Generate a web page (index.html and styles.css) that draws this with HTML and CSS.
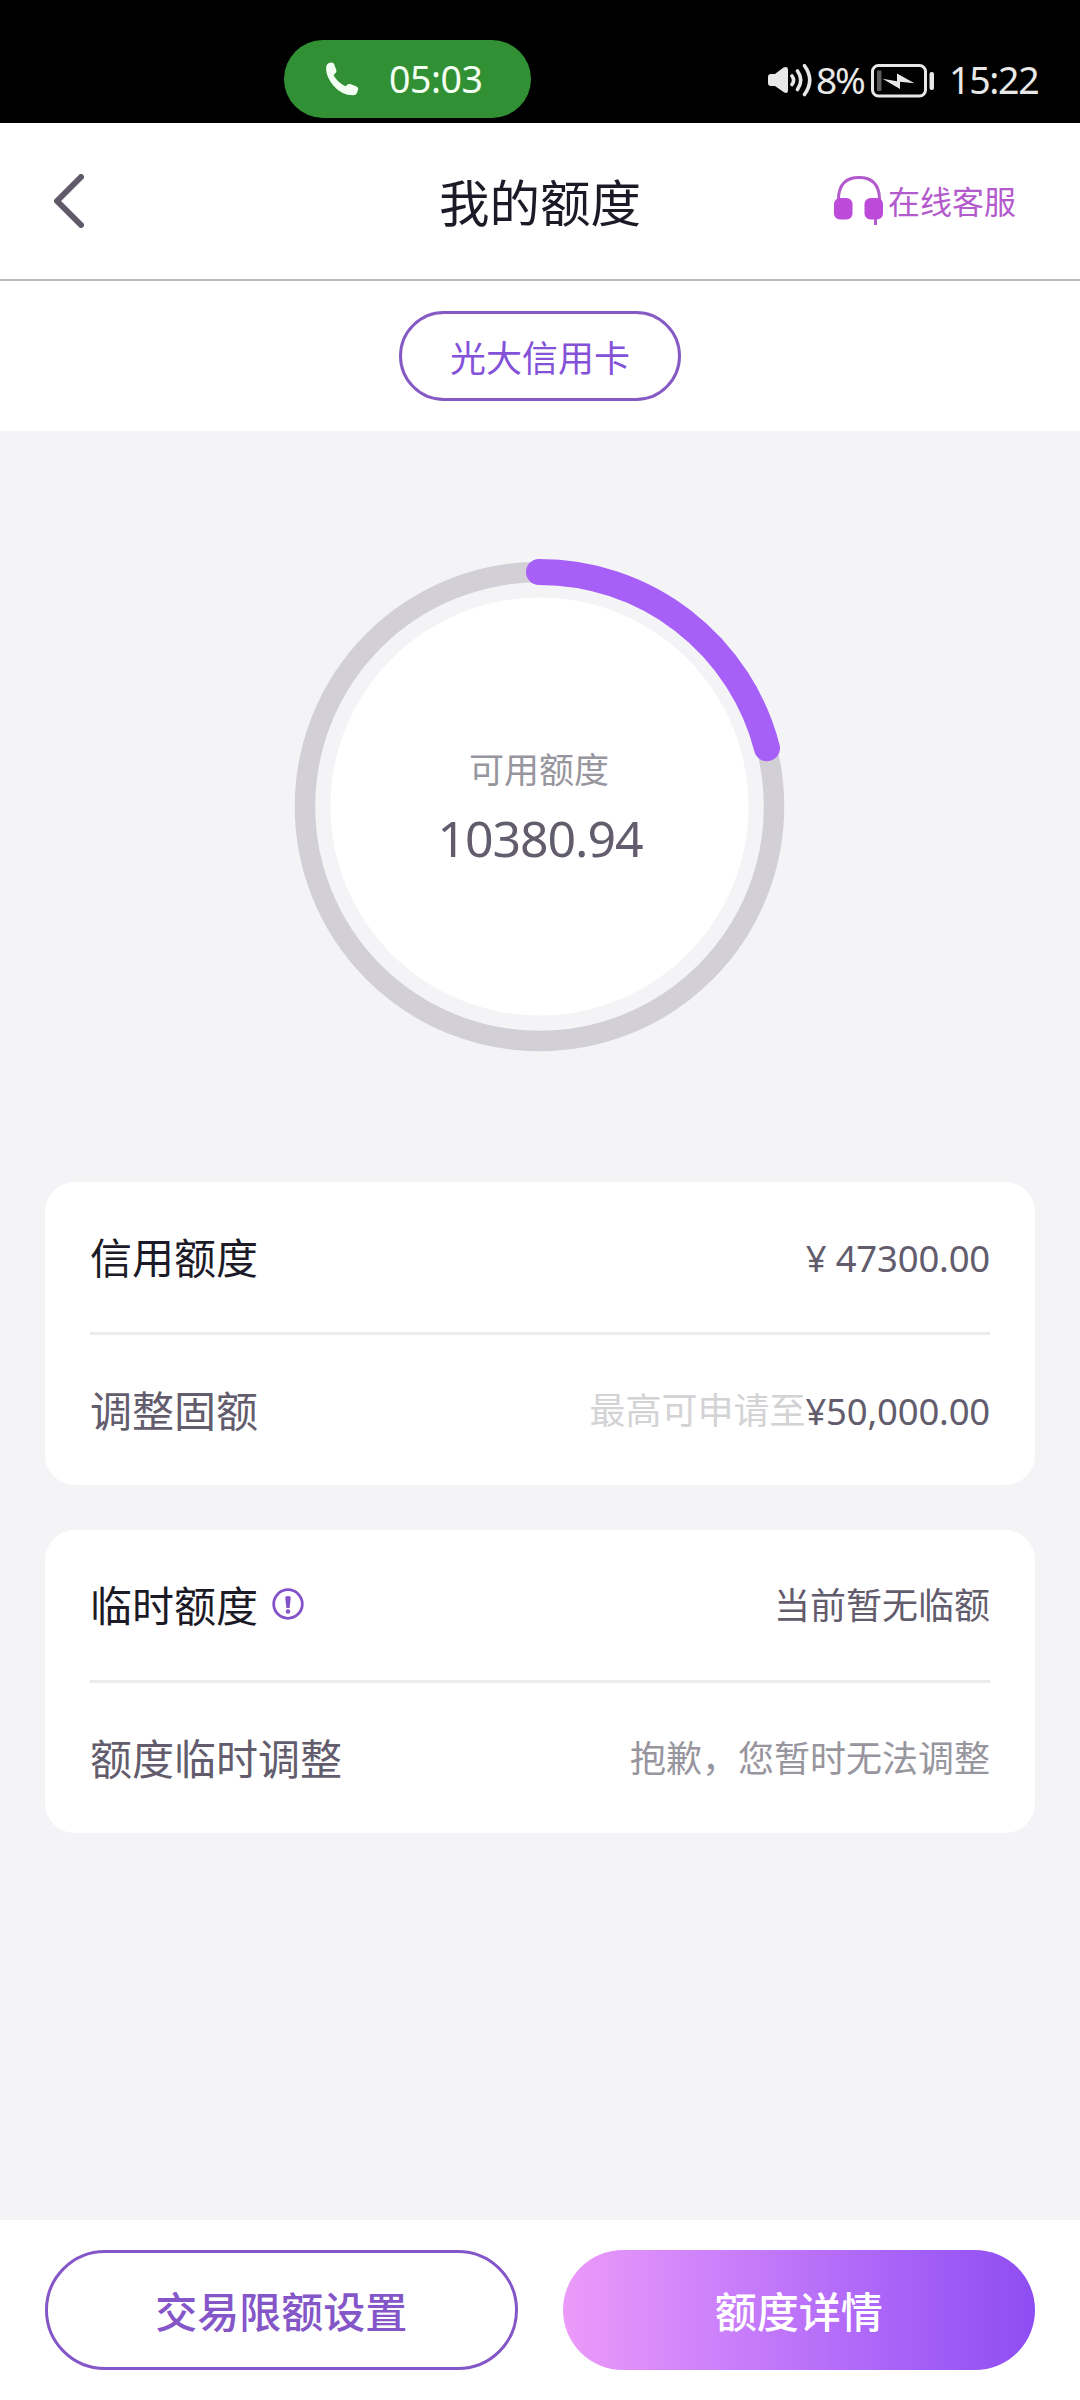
FILE: index.html
```html
<!DOCTYPE html>
<html lang="zh-CN">
<head>
<meta charset="utf-8">
<title>我的额度</title>
<link rel="stylesheet" href="styles.css">
</head>
<body>
<div class="screen">
  <div class="status-bar">
    <div class="call-pill">
      <svg class="phone-icon" viewBox="0 0 34 34" width="34" height="34"><path d="M1.500 3.500Q3 .5 6.500 .5Q8.500 .4 9.300 2.400L11.300 8Q11.800 9.700 10.600 10.900L8.600 13.200Q12 20 20.500 24.300L22.500 22.500Q23.700 21.500 25.300 22.100L31.500 24.600Q33.800 25.600 33 28L32 31Q31 33.300 28.300 33.300Q17 33.500 8.700 24Q-.5 13 1.500 3.500Z"/></svg>
      <span class="call-time">05:03</span>
    </div>
    <div class="indicators">
      <svg class="sound-icon" viewBox="0 0 44 34" width="44" height="34"><path class="solid" d="M3 10H7L15.500 3.500Q20 1.500 20 6V26Q20 30.500 15.500 28L7 22H3Q0 22 0 19V13Q0 10 3 10Z"/><path class="wave" d="M24 12Q27.200 16 24 20.500M29.500 7Q36 16 29.500 25.500M36.500 1.700Q47 16 36.500 30.500"/></svg>
      <span class="battery-level">8%</span>
      <svg class="battery-icon" viewBox="0 0 64 34" width="64" height="34"><rect class="shell" x="1.500" y="1.500" width="53" height="30.500" rx="6"/><rect class="charge" x="6" y="6.500" width="4.500" height="20.500" rx="1"/><path class="solid" d="M11.500 14.800L26 17.200V9.500L43.500 19.300L29 17.800V25Z"/><rect class="solid" x="58.500" y="8" width="4.500" height="18" rx="2"/></svg>
      <span class="clock">15:22</span>
    </div>
  </div>

  <header class="header">
    <svg class="back-icon" viewBox="0 0 30 54" width="30" height="54"><path d="M27 3L3 27L27 51"/></svg>
    <h1 class="title">我的额度</h1>
    <div class="service">
      <svg class="headset-icon" viewBox="0 0 50 50" width="50" height="50"><path class="band" d="M4.500 24V22Q5.500 1.500 25 1.500Q44.500 1.500 45.500 22V24M41.500 40V49"/><rect class="ear" x="0" y="22" width="18.500" height="21.500" rx="6"/><rect class="ear" x="30.500" y="22" width="18.500" height="21.500" rx="6"/></svg>
      <span class="service-label">在线客服</span>
    </div>
  </header>

  <nav class="tabs"><span class="tab">光大信用卡</span></nav>

  <main class="content">
    <div class="gauge">
      <svg class="gauge-ring" viewBox="0 0 496 496" width="496" height="496"><circle class="disc" cx="247.500" cy="248.500" r="209"/><circle class="track" cx="247.500" cy="248.500" r="234.500"/><path class="progress" d="M247 14A234.500 234.500 0 0 1 475 190.200"/></svg>
      <div class="gauge-text">
        <span class="gauge-label">可用额度</span>
        <span class="gauge-value">10380.94</span>
      </div>
    </div>

    <section class="card">
      <div class="row">
        <span class="label strong">信用额度</span>
        <span class="value amount">¥ 47300.00</span>
      </div>
      <div class="row">
        <span class="label">调整固额</span>
        <span class="value"><span class="hint">最高可申请至</span><span class="amount">¥50,000.00</span></span>
      </div>
    </section>

    <section class="card">
      <div class="row">
        <span class="label strong">临时额度</span>
        <svg class="info-icon" viewBox="0 0 32 32" width="32" height="32"><circle class="rim" cx="16" cy="16" r="14.300"/><path class="mark" d="M13.200 9.500Q13.200 8 16 8Q18.800 8 18.800 9.500L17.600 20H14.400Z"/><circle class="mark" cx="16" cy="23.500" r="2.200"/></svg>
        <span class="value">当前暂无临额</span>
      </div>
      <div class="row">
        <span class="label">额度临时调整</span>
        <span class="value muted">抱歉，您暂时无法调整</span>
      </div>
    </section>
  </main>

  <footer class="actions">
    <button class="button outline" type="button">交易限额设置</button>
    <button class="button filled" type="button">额度详情</button>
  </footer>
</div>
</body>
</html>
```
FILE: styles.css
```css
* {
  box-sizing: border-box;
}

body {
  margin: 0;
  font-family: "Noto Sans", "Noto Sans CJK SC", sans-serif;
  color: #625c6d;
}

.screen {
  display: flex;
  flex-direction: column;
  width: 1080px;
  height: 2400px;
  background: #f4f4f7;
}

svg {
  display: block;
  flex: none;
}

/* Status bar */
.status-bar {
  display: flex;
  justify-content: space-between;
  height: 123px;
  padding: 40px 41px 0 284px;
  background: #000;
  font-size: 37.5px;
  line-height: 78px;
  white-space: nowrap;
}

.call-pill {
  display: flex;
  align-items: center;
  gap: 30px;
  width: 247px;
  height: 78px;
  padding-left: 41px;
  border-radius: 39px;
  background: #319033;
  color: #f2fff2;
}

.phone-icon {
  fill: #f2fff2;
}

.call-time {
  letter-spacing: -0.5px;
}

.indicators {
  display: flex;
  color: #e8e8e8;
}

.indicators .solid {
  fill: #e8e8e8;
}

.sound-icon {
  margin: 24px 4px 0 0;
}

.sound-icon .wave {
  fill: none;
  stroke: #e8e8e8;
  stroke-width: 3.6;
  stroke-linecap: round;
}

.battery-level {
  width: 55px;
  padding-top: 1px;
  font-size: 37px;
  letter-spacing: -2.2px;
}

.battery-icon {
  margin-top: 24px;
}

.battery-icon .shell {
  fill: none;
  stroke: #e8e8e8;
  stroke-width: 3;
}

.battery-icon .charge {
  fill: #5c5c5c;
}

.clock {
  width: 90px;
  margin-left: 14px;
  padding-top: 1px;
  letter-spacing: -1.3px;
}

/* Header */
.header {
  display: grid;
  grid-template-columns: 1fr auto 1fr;
  align-items: center;
  height: 158px;
  padding: 0 64px 0 54px;
  border-bottom: 2px solid #b9b9b9;
  background: #fff;
}

.back-icon {
  fill: none;
  stroke: #605a68;
  stroke-width: 6;
  stroke-linecap: round;
  stroke-linejoin: round;
}

.title {
  margin: 4px 0 0 10px;
  font-size: 50.5px;
  font-weight: 400;
  line-height: 60px;
  color: #1c1a27;
}

.service {
  display: flex;
  align-items: center;
  justify-content: flex-end;
  gap: 4px;
  color: #b35bcd;
}

.headset-icon .band {
  fill: none;
  stroke: #b35bcd;
  stroke-width: 3;
}

.headset-icon .ear {
  fill: #bd4bd9;
}

.service-label {
  padding-top: 1px;
  font-size: 32px;
  line-height: 40px;
}

/* Card selector */
.tabs {
  display: flex;
  justify-content: center;
  height: 150px;
  padding-top: 30px;
  background: #fff;
}

.tab {
  width: 282px;
  height: 90px;
  border: 3px solid #8659c4;
  border-radius: 45px;
  font-size: 36px;
  line-height: 89px;
  text-align: center;
  color: #8452d8;
}

/* Quota gauge */
.content {
  flex: 1;
  padding: 127px 45px 0;
}

.gauge {
  display: grid;
  place-items: center;
  width: 496px;
  height: 496px;
  margin: 0 auto 128px;
}

.gauge-ring,
.gauge-text {
  grid-area: 1 / 1;
}

.disc {
  fill: #fff;
}

.track,
.progress {
  fill: none;
  stroke: #d2cfd7;
  stroke-width: 20.5;
}

.progress {
  stroke: #a660f8;
  stroke-width: 26;
  stroke-linecap: round;
}

.gauge-text {
  display: flex;
  flex-direction: column;
  align-items: center;
  padding-top: 4px;
}

.gauge-label {
  margin-right: 2px;
  font-size: 35px;
  line-height: 60px;
  color: #97959d;
}

.gauge-value {
  font-size: 50px;
  line-height: 76px;
  letter-spacing: -1.1px;
}

/* Cards */
.card {
  height: 303px;
  margin-bottom: 45px;
  padding: 0 45px;
  border-radius: 30px;
  background: #fff;
}

.row {
  display: flex;
  align-items: center;
  height: 150px;
  padding-top: 2px;
}

.row + .row {
  height: 153px;
  border-top: 3px solid #ebebeb;
}

.label {
  font-size: 42px;
  line-height: 60px;
}

.strong {
  color: #1c1a27;
}

.value {
  display: flex;
  margin-left: auto;
  font-size: 36px;
  line-height: 54px;
}

.amount {
  font-size: 36.5px;
  letter-spacing: -0.2px;
}

.hint {
  color: #d3d3d5;
}

.muted {
  color: #97959d;
}

.info-icon {
  margin: -4px 0 0 14px;
}

.info-icon .rim {
  fill: none;
  stroke: #8452c8;
  stroke-width: 2.8;
}

.info-icon .mark {
  fill: #8452c8;
}

/* Bottom actions */
.actions {
  display: grid;
  grid-template-columns: 1fr 1fr;
  gap: 45px;
  height: 180px;
  padding: 30px 45px;
  background: #fff;
}

.button {
  height: 120px;
  padding: 0 0 2px;
  border: 0;
  border-radius: 60px;
  font-family: inherit;
  font-size: 42px;
  font-weight: 500;
}

.outline {
  border: 3px solid #8456c8;
  background: #fff;
  color: #8456c8;
}

.filled {
  background: linear-gradient(90deg, #ec9bf9, #cc80fa 33%, #ad66f8 66%, #8e4df2);
  color: #fff;
}
```
